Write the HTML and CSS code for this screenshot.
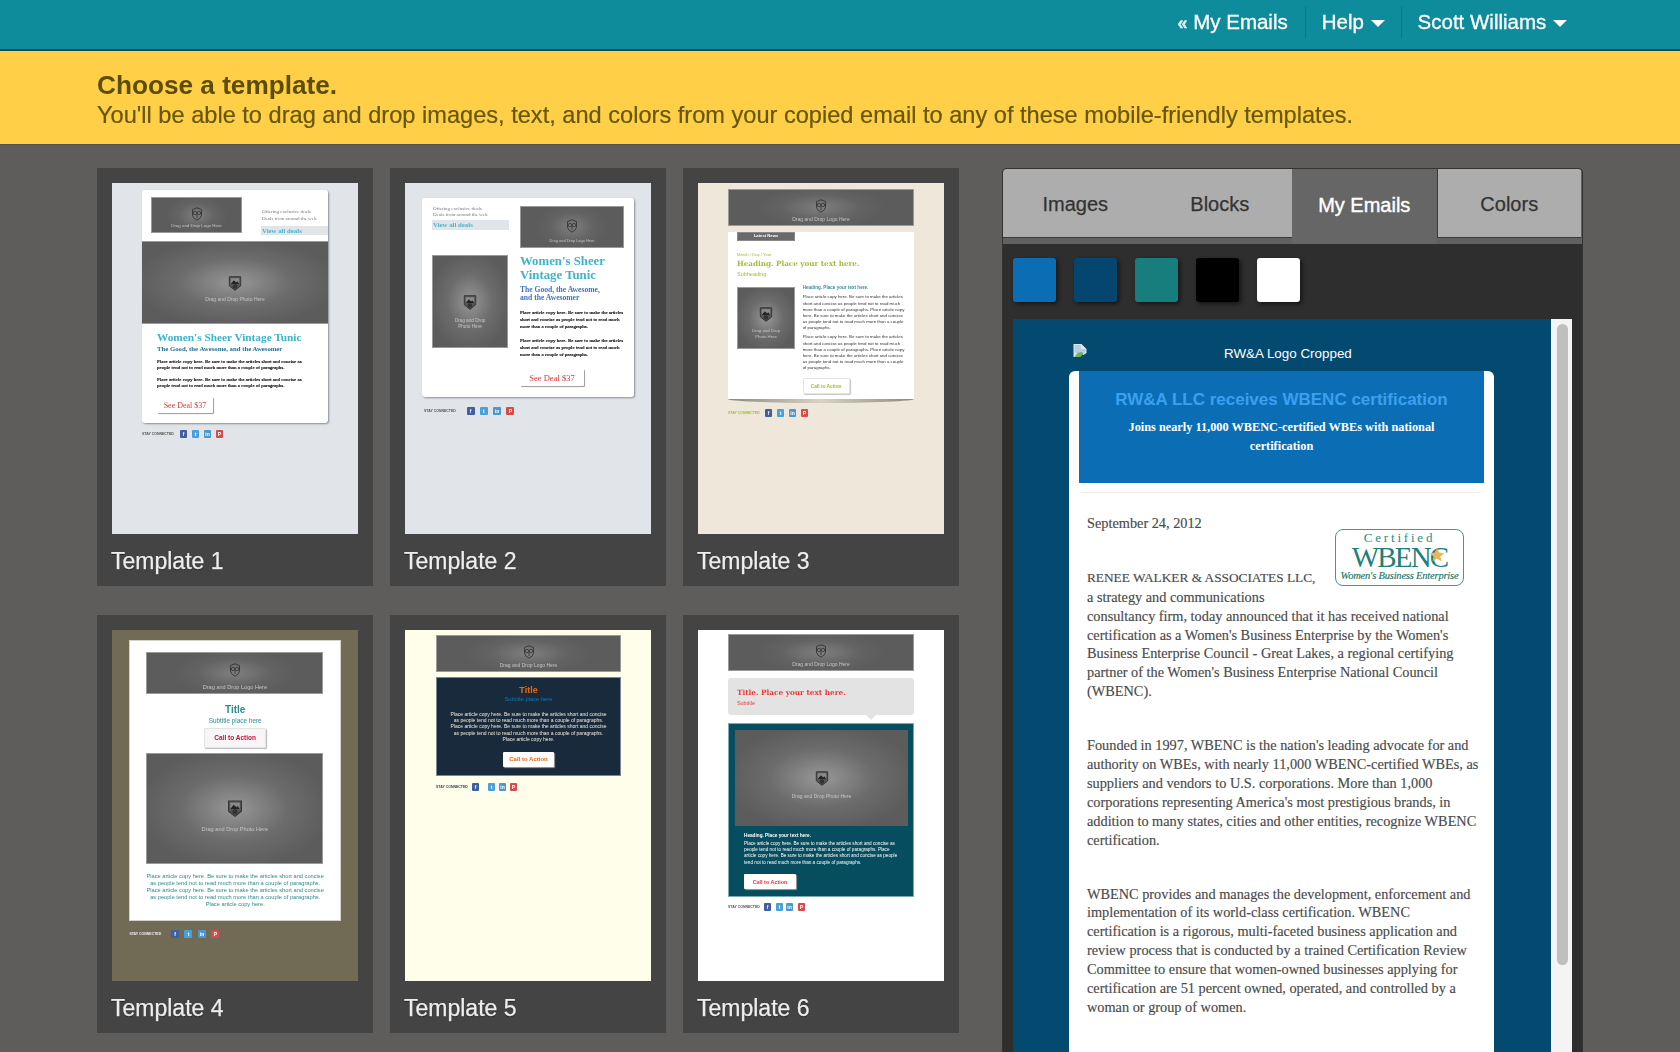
FILE: index.html
```html
<!DOCTYPE html>
<html lang="en">
<head>
<meta charset="utf-8">
<title>Choose a template</title>
<link rel="stylesheet" href="styles.css">
</head>
<body>
<svg class="defs" aria-hidden="true">
  <symbol id="i-logo" viewBox="0 0 12 14">
    <path d="M1.5 2.5 6 .8l4.500 1.700v5.500Q10.500 11 6 13.200 1.500 11 1.500 8z" fill="none" stroke="#333" stroke-width=".9"/>
    <circle cx="4" cy="6" r="1.700" fill="none" stroke="#333" stroke-width=".8"/>
    <circle cx="8" cy="6" r="1.700" fill="none" stroke="#333" stroke-width=".8"/>
    <path d="M6 7v4" stroke="#333" stroke-width=".8"/>
  </symbol>
  <symbol id="i-photo" viewBox="0 0 12 14">
    <path d="M1 1.500h10v8L6 13.500 1 9.500z" fill="#555" stroke="#333" stroke-width=".8"/>
    <rect x="2.300" y="2.800" width="7.400" height="5" fill="#8a8a8a"/>
    <path d="M2.300 7.800 5 4.500l2 2 1-1 1.700 2.300z" fill="#222"/>
    <circle cx="6" cy="10" r="2" fill="#333"/>
  </symbol>
</svg>
<div class="page">
  <header class="topbar">
    <a class="nav-item nav-back"><span class="nav-quote">«</span> My Emails</a>
    <a class="nav-item">Help <i class="caret"></i></a>
    <a class="nav-item">Scott Williams <i class="caret"></i></a>
  </header>
  <section class="banner">
    <h1>Choose a template.</h1>
    <p>You'll be able to drag and drop images, text, and colors from your copied email to any of these mobile-friendly templates.</p>
  </section>
  <main class="main">
    <div class="grid">

      <article class="card">
        <div class="thumb thumb-1">
          <div class="t1-card">
            <div class="t1-head">
              <div class="ph t1-logo"><svg class="ph-icon"><use href="#i-logo"/></svg><span>Drag and Drop Logo Here</span></div>
              <div class="t1-offer">
                <p class="offer-text">Offering exclusive deals<br>Deals from around the web</p>
                <p class="offer-link">View all deals</p>
              </div>
            </div>
            <div class="ph ph-photo t1-hero"><svg class="ph-icon"><use href="#i-photo"/></svg><span>Drag and Drop Photo Here</span></div>
            <div class="t1-body">
              <h3 class="t1-title">Women's Sheer Vintage Tunic</h3>
              <h4 class="t1-sub">The Good, the Awesome, and the Awesomer</h4>
              <p class="t1-para">Place article copy here. Be sure to make the articles short and concise as people tend not to read much more than a couple of paragraphs.</p>
              <p class="t1-para t1-para-2">Place article copy here. Be sure to make the articles short and concise as people tend not to read much more than a couple of paragraphs.</p>
              <span class="t-btn t1-btn">See Deal $37</span>
            </div>
          </div>
          <div class="social social-1"><span class="soc-label">STAY CONNECTED</span><i class="soc fb">f</i><i class="soc tw">t</i><i class="soc li">in</i><i class="soc pi">P</i></div>
        </div>
        <h2 class="card-label">Template 1</h2>
      </article>

      <article class="card">
        <div class="thumb thumb-2">
          <div class="t2-card">
            <div class="t2-left">
              <p class="offer-text">Offering exclusive deals<br>Deals from around the web</p>
              <p class="offer-link t2-link">View all deals</p>
              <div class="ph ph-photo t2-photo"><svg class="ph-icon"><use href="#i-photo"/></svg><span>Drag and Drop<br>Photo Here</span></div>
            </div>
            <div class="t2-right">
              <div class="ph t2-logo"><svg class="ph-icon"><use href="#i-logo"/></svg><span>Drag and Drop Logo Here</span></div>
              <h3 class="t2-title">Women's Sheer<br>Vintage Tunic</h3>
              <h4 class="t2-sub">The Good, the Awesome,<br>and the Awesomer</h4>
              <p class="t2-para">Place article copy here. Be sure to make the articles short and concise as people tend not to read much more than a couple of paragraphs.</p>
              <p class="t2-para t2-para-2">Place article copy here. Be sure to make the articles short and concise as people tend not to read much more than a couple of paragraphs.</p>
              <span class="t-btn t2-btn">See Deal $37</span>
            </div>
          </div>
          <div class="social social-2"><span class="soc-label">STAY CONNECTED</span><i class="soc fb">f</i><i class="soc tw">t</i><i class="soc li">in</i><i class="soc pi">P</i></div>
        </div>
        <h2 class="card-label">Template 2</h2>
      </article>

      <article class="card">
        <div class="thumb thumb-3">
          <div class="ph t3-logo"><svg class="ph-icon"><use href="#i-logo"/></svg><span>Drag and Drop Logo Here</span></div>
          <div class="t3-sheet">
            <span class="t3-tab">Latest News</span>
            <p class="t3-date">Month / Day / Year</p>
            <h3 class="t3-title">Heading. Place your text here.</h3>
            <p class="t3-sub">Subheading</p>
            <div class="t3-row">
              <div class="ph ph-photo t3-photo"><svg class="ph-icon"><use href="#i-photo"/></svg><span>Drag and Drop<br>Photo Here</span></div>
              <div class="t3-col">
                <h4 class="t3-head">Heading. Place your text here.</h4>
                <p class="t3-para">Place article copy here. Be sure to make the articles short and concise as people tend not to read much more than a couple of paragraphs. Place article copy here. Be sure to make the articles short and concise as people tend not to read much more than a couple of paragraphs.</p>
                <p class="t3-para t3-para-2">Place article copy here. Be sure to make the articles short and concise as people tend not to read much more than a couple of paragraphs. Place article copy here. Be sure to make the articles short and concise as people tend not to read much more than a couple of paragraphs.</p>
                <span class="t-btn t3-btn">Call to Action</span>
              </div>
            </div>
          </div>
          <div class="t3-curve"></div>
          <div class="social social-3"><span class="soc-label">STAY CONNECTED</span><i class="soc fb">f</i><i class="soc tw">t</i><i class="soc li">in</i><i class="soc pi">P</i></div>
        </div>
        <h2 class="card-label">Template 3</h2>
      </article>

      <article class="card">
        <div class="thumb thumb-4">
          <div class="t4-sheet">
            <div class="ph t4-logo"><svg class="ph-icon"><use href="#i-logo"/></svg><span>Drag and Drop Logo Here</span></div>
            <h3 class="t4-title">Title</h3>
            <p class="t4-sub">Subtitle place here</p>
            <span class="t-btn t4-btn">Call to Action</span>
            <div class="ph ph-photo t4-photo"><svg class="ph-icon"><use href="#i-photo"/></svg><span>Drag and Drop Photo Here</span></div>
            <p class="t4-para">Place article copy here. Be sure to make the articles short and concise as people tend not to read much more than a couple of paragraphs. Place article copy here. Be sure to make the articles short and concise as people tend not to read much more than a couple of paragraphs. Place article copy here.</p>
          </div>
          <div class="social social-4"><span class="soc-label">STAY CONNECTED</span><i class="soc fb">f</i><i class="soc tw">t</i><i class="soc li">in</i><i class="soc pi">P</i></div>
        </div>
        <h2 class="card-label">Template 4</h2>
      </article>

      <article class="card">
        <div class="thumb thumb-5">
          <div class="ph t5-logo"><svg class="ph-icon"><use href="#i-logo"/></svg><span>Drag and Drop Logo Here</span></div>
          <div class="t5-box">
            <h3 class="t5-title">Title</h3>
            <p class="t5-sub">Subtitle place here</p>
            <p class="t5-para">Place article copy here. Be sure to make the articles short and concise as people tend not to read much more than a couple of paragraphs. Place article copy here. Be sure to make the articles short and concise as people tend not to read much more than a couple of paragraphs. Place article copy here.</p>
            <span class="t-btn t5-btn">Call to Action</span>
          </div>
          <div class="social social-5"><span class="soc-label">STAY CONNECTED</span><i class="soc fb">f</i><i class="soc tw">t</i><i class="soc li">in</i><i class="soc pi">P</i></div>
        </div>
        <h2 class="card-label">Template 5</h2>
      </article>

      <article class="card">
        <div class="thumb thumb-6">
          <div class="ph t6-logo"><svg class="ph-icon"><use href="#i-logo"/></svg><span>Drag and Drop Logo Here</span></div>
          <div class="t6-bubble">
            <h3 class="t6-title">Title. Place your text here.</h3>
            <p class="t6-sub">Subtitle</p>
          </div>
          <div class="t6-box">
            <div class="ph ph-photo t6-photo"><svg class="ph-icon"><use href="#i-photo"/></svg><span>Drag and Drop Photo Here</span></div>
            <h4 class="t6-head">Heading. Place your text here.</h4>
            <p class="t6-para">Place article copy here. Be sure to make the articles short and concise as people tend not to read much more than a couple of paragraphs. Place article copy here. Be sure to make the articles short and concise as people tend not to read much more than a couple of paragraphs.</p>
            <span class="t-btn t6-btn">Call to Action</span>
          </div>
          <div class="social social-6"><span class="soc-label">STAY CONNECTED</span><i class="soc fb">f</i><i class="soc tw">t</i><i class="soc li">in</i><i class="soc pi">P</i></div>
        </div>
        <h2 class="card-label">Template 6</h2>
      </article>

    </div>

    <aside class="panel">
      <nav class="tabs">
        <a class="tab">Images</a>
        <a class="tab">Blocks</a>
        <a class="tab tab-active">My Emails</a>
        <a class="tab tab-split">Colors</a>
      </nav>
      <div class="swatches">
        <i class="swatch sw-blue"></i>
        <i class="swatch sw-navy"></i>
        <i class="swatch sw-teal"></i>
        <i class="swatch sw-black"></i>
        <i class="swatch sw-white"></i>
      </div>
      <div class="viewer">
        <div class="email">
          <div class="email-logo">
            <svg class="broken" viewBox="0 0 13 14" aria-hidden="true">
              <path d="M0 0h8l5 5v4l-3 2-2-1-3 3H0z" fill="#dfe6ee"/>
              <path d="M1 1h6l1 4h4v3l-2 1.500-2-1-2 1-5-1z" fill="#b9cde2"/>
              <path d="M1 13l3-4 4-1 2 1.500-3 3.500z" fill="#6fb44e"/>
            </svg>
            <span>RW&amp;A Logo Cropped</span>
          </div>
          <div class="email-card">
            <div class="email-hero">
              <h2>RW&amp;A LLC receives WBENC certification</h2>
              <p>Joins nearly 11,000 WBENC-certified WBEs with national certification</p>
            </div>
            <hr class="email-rule">
            <div class="email-body">
              <p class="email-date">September 24, 2012</p>
              <div class="wbenc">
                <span class="wbenc-cert">Certified</span>
                <span class="wbenc-name">WBENC<svg class="wbenc-star" viewBox="0 0 10 10" aria-hidden="true"><path d="M5 0l1.500 3.300 3.500.4-2.600 2.300.8 3.500L5 7.700 1.800 9.500l.8-3.500L0 3.700l3.500-.4z" fill="#e8b65a"/></svg></span>
                <span class="wbenc-tag">Women's Business Enterprise</span>
              </div>
              <p><span class="email-caps">RENEE WALKER &amp; ASSOCIATES LLC,</span><br>a strategy and communications<br>consultancy firm, today announced that it has received national<br>certification as a Women's Business Enterprise by the Women's<br>Business Enterprise Council - Great Lakes, a regional certifying<br>partner of the Women's Business Enterprise National Council<br>(WBENC).</p>
              <p>Founded in 1997, WBENC is the nation's leading advocate for and<br>authority on WBEs, with nearly 11,000 WBENC-certified WBEs, as<br>suppliers and vendors to U.S. corporations. More than 1,000<br>corporations representing America's most prestigious brands, in<br>addition to many states, cities and other entities, recognize WBENC<br>certification.</p>
              <p>WBENC provides and manages the development, enforcement and<br>implementation of its world-class certification. WBENC<br>certification is a rigorous, multi-faceted business application and<br>review process that is conducted by a trained Certification Review<br>Committee to ensure that women-owned businesses applying for<br>certification are 51 percent owned, operated, and controlled by a<br>woman or group of women.</p>
            </div>
          </div>
        </div>
        <div class="scrollbar"><i class="scroll-thumb"></i></div>
      </div>
    </aside>
  </main>
</div>
</body>
</html>
```
FILE: styles.css
```css
* { box-sizing: border-box; }
html, body { margin: 0; height: 100%; overflow: hidden; }
body { background: #5e5d5b; font-family: "Liberation Sans", Arial, sans-serif; }
h1, h2, h3, h4, p { margin: 0; font-weight: normal; }
i { font-style: normal; }
.defs { position: absolute; width: 0; height: 0; }
.page { height: 1052px; display: flex; flex-direction: column; overflow: hidden; filter: blur(.35px); }

/* top bar */
.topbar { height: 51px; flex: none; display: flex; justify-content: flex-end; background: #0f8c9b; border-bottom: 2px solid #0e4a52; padding: 7px 97px 0 0; }
.nav-item { height: 31px; line-height: 30px; color: #fff; font-size: 20.500px; -webkit-text-stroke: .3px #fff; padding: 0 16px 0 16px; border-left: 1px solid #0b7582; white-space: nowrap; }
.nav-back { border-left: 0; padding-right: 17px; }
.nav-quote { font-size: 18px; color: #d8eef0; font-weight: bold; }
.caret { display: inline-block; width: 0; height: 0; border-left: 7px solid transparent; border-right: 7px solid transparent; border-top: 7px solid #fff; vertical-align: 2px; margin-left: 1px; }

/* banner */
.banner { height: 94px; flex: none; background: #ffcf47; border-bottom: 1px solid #55554f; padding: 20px 0 0 97px; color: #66570a; }
.banner h1 { font-size: 26.200px; line-height: 29px; font-weight: bold; color: #5d4d04; }
.banner p { font-size: 23.600px; line-height: 31px; -webkit-text-stroke: .2px #66570a; white-space: nowrap; }

/* layout */
.main { flex: 1; min-height: 0; display: flex; padding: 23px 0 0 97px; }
.grid { display: grid; grid-template-columns: repeat(3, 276px); grid-auto-rows: 418px; gap: 29px 17px; flex: none; }
.card { background: #444; padding: 15px 15px 0 15px; }
.thumb { width: 246px; height: 351px; overflow: hidden; filter: blur(.3px); }
.card-label { margin: 14px 0 0 -1px; font-size: 23px; line-height: 27px; color: #eee; -webkit-text-stroke: .25px #eee; text-shadow: 0 1px 1px #222; }
.thumb-1, .thumb-2 { background: #e1e4e8; }
.thumb-3 { background: #efe8da; }
.thumb-4 { background: #716a55; }
.thumb-5 { background: #fffeea; }
.thumb-6 { background: #fff; }

/* placeholders */
.ph { display: flex; flex-direction: column; align-items: center; justify-content: space-between; padding: 9px 0 3px; text-align: center; background: radial-gradient(ellipse 35% 60% at center, #7f7f7f 0, #636363 60%, #5c5c5c 100%); border: 1px solid #9a9a9a; color: #c4c4c4; font-size: 5px; line-height: 6px; flex: none; }
.ph-icon { width: 12px; height: 14px; flex: none; }
.ph-photo { justify-content: center; gap: 5px; padding: 11px 0 0; background: radial-gradient(ellipse 55% 55% at center, #979797 0, #6c6c6c 55%, #5c5c5c 100%); }
.ph-photo .ph-icon { width: 14px; height: 16px; }

/* shared thumbnail pieces */
.t-btn { display: flex; align-items: center; justify-content: center; background: #fff; box-shadow: 1px 1px 1px #9a9a9a; border-radius: 1px; }
.social { display: flex; align-items: center; height: 8px; }
.soc-label { font-size: 3.500px; color: #555; font-weight: bold; white-space: nowrap; }
.soc { width: 7px; height: 8px; display: flex; align-items: center; justify-content: center; color: #fff; font-size: 5px; font-weight: bold; flex: none; border-radius: 1px; }
.fb { background: #3f5fa3; }
.tw { background: #48a0dc; }
.li { background: #4d97d0; }
.pi { background: #d44c4c; }
.offer-text { font-family: "Liberation Serif", serif; font-size: 5px; line-height: 6.500px; color: #777; padding-left: 1px; white-space: nowrap; }
.offer-link { font-family: "Liberation Serif", serif; font-size: 6.800px; font-weight: bold; line-height: 9px; color: #4ab7cc; background: #e1e4e8; padding-left: 1px; margin-top: 4px; }

/* template 1 */
.t1-card { width: 186px; height: 233px; margin: 7px 0 0 30px; background: #fff; border-radius: 3px; box-shadow: 1px 1px 2px #858e9e; overflow: hidden; }
.t1-head { display: flex; height: 51px; padding: 7px 0 0 9px; }
.t1-logo { width: 91px; height: 36px; font-size: 4.400px; }
.t1-offer { margin-left: 19px; padding-top: 12px; flex: 1; }
.t1-hero { width: 186px; height: 83px; border-width: 1px 0; font-size: 5px; }
.t1-body { padding-left: 15px; }
.t1-title { font-family: "Liberation Serif", serif; font-size: 11.300px; line-height: 12px; font-weight: bold; color: #3eb3c9; margin-top: 6.700px; white-space: nowrap; }
.t1-sub { font-family: "Liberation Serif", serif; font-size: 6.750px; line-height: 8px; font-weight: bold; color: #1f6f8c; margin-top: 2px; white-space: nowrap; }
.t1-para { font-family: "Liberation Serif", serif; font-size: 5px; line-height: 6px; color: #000; -webkit-text-stroke: .15px #000; width: 158px; margin-top: 6.500px; }
.t1-para-2 { margin-top: 6px; }
.t1-btn { width: 56px; height: 16px; margin-top: 8px; color: #d63c3c; font: 8px "Liberation Serif", serif; }
.social-1 { margin: 7px 0 0 30px; gap: 5px; }
.social-1 .soc-label { width: 33px; }

/* template 2 */
.t2-card { display: flex; width: 212px; height: 199.500px; margin: 14.500px 0 0 17px; background: #fff; border-radius: 3px; box-shadow: 1px 1px 2px #858e9e; }
.t2-left { width: 77px; margin-left: 10px; padding-top: 8px; }
.t2-link { margin-top: 1px; height: 10px; }
.t2-photo { width: 76px; height: 93.400px; margin-top: 25.600px; font-size: 4.700px; gap: 8px; padding-top: 20px; }
.t2-right { width: 104px; margin-left: 11px; padding-top: 8.500px; }
.t2-logo { width: 104px; height: 42px; font-size: 3.900px; padding-top: 12px; }
.t2-title { font-family: "Liberation Serif", serif; font-size: 12.800px; line-height: 14.500px; font-weight: bold; color: #3eb3c9; margin-top: 5.750px; white-space: nowrap; }
.t2-sub { font-family: "Liberation Serif", serif; font-size: 7.600px; line-height: 8px; font-weight: bold; color: #3f72ba; margin-top: 3px; white-space: nowrap; }
.t2-para { font-family: "Liberation Serif", serif; font-size: 5px; line-height: 7px; color: #000; -webkit-text-stroke: .15px #000; margin-top: 7.500px; }
.t2-para-2 { margin-top: 7px; }
.t2-btn { width: 64px; height: 17.500px; margin-top: 10.500px; color: #d63c3c; font: 8.500px "Liberation Serif", serif; }
.social-2 { margin: 9.600px 0 0 19px; }
.social-2 .soc-label { width: 42.500px; }
.social-2 .soc { width: 8px; margin-right: 5.300px; }

/* template 3 */
.t3-logo { width: 186px; height: 37px; margin: 6px 0 0 30px; }
.t3-sheet { width: 186px; height: 167px; margin: 6px 0 0 30px; background: #fff; padding-left: 9px; }
.t3-tab { display: block; width: 58px; height: 8.700px; background: #6a6a6a; border: 1px solid #8a8a8a; color: #fff; font-size: 4.200px; line-height: 6.700px; font-weight: bold; text-align: center; }
.t3-date { font-size: 4.200px; line-height: 5px; color: #a9b83e; margin-top: 11.500px; }
.t3-title { font-family: "DejaVu Serif", serif; font-size: 7.200px; line-height: 10px; font-weight: bold; color: #a9b83e; margin-top: 1.800px; white-space: nowrap; }
.t3-sub { font-size: 5.500px; line-height: 6px; color: #a9b83e; margin-top: 2px; }
.t3-row { display: flex; gap: 7.700px; margin-top: 8.500px; }
.t3-photo { width: 58px; height: 62.300px; margin-top: 1.200px; font-size: 4.300px; gap: 6.500px; padding-top: 10px; }
.t3-col { width: 103px; }
.t3-head { font-size: 4.600px; line-height: 5px; font-weight: bold; color: #3c8f94; white-space: nowrap; }
.t3-para { font-size: 4.350px; line-height: 6.200px; color: #333; margin-top: 3.900px; }
.t3-para-2 { margin-top: 2.800px; }
.t3-btn { width: 47px; height: 16px; margin-top: 6.400px; color: #a9b83e; font-size: 4.800px; font-weight: bold; border: 1px solid #e4e4e4; box-shadow: 1px 1px 1px #c8c8c8; }
.t3-curve { width: 186px; height: 4px; margin-left: 30px; background: linear-gradient(90deg, #8d887b, #d9d3c6 50%, #8d887b); border-radius: 0 0 50% 50% / 0 0 100% 100%; }
.social-3 { margin: 6px 0 0 30px; gap: 5px; }
.social-3 .soc-label { width: 32px; color: #a9b83e; }

/* template 4 */
.t4-sheet { width: 211.600px; height: 280.700px; margin: 10px 0 0 17.400px; background: #fff; border: 1px solid #d4d2cb; padding-top: 11px; text-align: center; }
.t4-logo { width: 177px; height: 41.700px; margin-left: 16px; font-size: 5.600px; padding-top: 10px; }
.t4-title { font-size: 10px; line-height: 10px; font-weight: bold; color: #2f8a8c; margin-top: 11.300px; }
.t4-sub { font-size: 6.400px; line-height: 7px; color: #2f8a8c; margin-top: 2px; }
.t4-btn { width: 62px; height: 20.300px; margin: 3.700px auto 0; color: #c0123c; font-size: 6.500px; font-weight: bold; background: #f7f5f5; border: 1px solid #e4e4e4; box-shadow: 1px 1px 1px #bbb; }
.t4-photo { width: 177px; height: 111px; margin: 5px 0 0 16px; font-size: 5.600px; gap: 9px; padding-top: 15px; }
.t4-photo .ph-icon { width: 16px; height: 18px; }
.t4-para { font-size: 5.700px; line-height: 7px; color: #2f8a8c; margin: 9.500px 16px 0; }
.social-4 { margin: 9.300px 0 0 17.400px; }
.social-4 .soc-label { width: 41.600px; color: #eee; }
.social-4 .soc { width: 8px; margin-right: 5.500px; }

/* template 5 */
.t5-logo { width: 185px; height: 37px; margin: 5px 0 0 31px; }
.t5-box { width: 185px; height: 99px; margin: 5px 0 0 31px; background: #192a3c; border: 1px solid #7c8794; padding-top: 7.500px; text-align: center; }
.t5-title { font-size: 9px; line-height: 9px; font-weight: bold; color: #e9690f; }
.t5-sub { font-size: 5.800px; line-height: 6px; color: #0b7bb8; margin-top: 1.500px; }
.t5-para { font-size: 5px; line-height: 6.300px; color: #f1ead8; margin: 8.800px 13px 0; }
.t5-btn { width: 51.500px; height: 15.300px; margin: 9.400px auto 0; color: #e9690f; font-size: 6px; font-weight: bold; }
.social-5 { margin: 6.500px 0 0 31px; }
.social-5 .soc-label { width: 36px; color: #2b4560; }
.social-5 .soc:nth-child(2) { margin-right: 9px; }
.social-5 .soc:nth-child(3), .social-5 .soc:nth-child(4) { margin-right: 4px; }

/* template 6 */
.t6-logo { width: 186px; height: 37px; margin: 4px 0 0 30px; }
.t6-bubble { position: relative; width: 186px; height: 37px; margin: 7px 0 0 30px; padding: 10px 0 0 9px; background: #e3e3e3; border-radius: 3px; }
.t6-bubble::after { content: ""; position: absolute; right: 38px; bottom: -5px; border-left: 5px solid transparent; border-right: 5px solid transparent; border-top: 5px solid #e3e3e3; }
.t6-title { font-family: "DejaVu Serif", serif; font-size: 7.300px; line-height: 9px; font-weight: bold; color: #ef3a3a; white-space: nowrap; }
.t6-sub { font-size: 5.400px; line-height: 5px; color: #ef3a3a; margin-top: 3.500px; }
.t6-box { width: 186px; height: 174px; margin: 8px 0 0 30px; background: #064d5f; border: 1px solid #7fa9b3; padding: 6px 6px 0; }
.t6-photo { width: 173px; height: 96px; border: 0; gap: 7px; padding-top: 13px; }
.t6-head { font-size: 4.700px; line-height: 5px; font-weight: bold; color: #fff; margin: 6.500px 0 0 9px; }
.t6-para { font-size: 4.650px; line-height: 6.300px; color: #fff; margin: 3.400px 0 0 9px; width: 156px; }
.t6-btn { width: 52px; height: 15px; margin: 8px 0 0 9px; color: #ef3a3a; font-size: 5.400px; font-weight: bold; }
.social-6 { margin: 5.500px 0 0 30px; }
.social-6 .soc-label { width: 36px; }
.social-6 .soc { margin-right: 5px; }
.social-6 .soc:nth-child(3) { margin-right: 3px; }

/* right panel */
.panel { width: 581px; margin-left: 43px; flex: none; display: flex; flex-direction: column; background: #2e2e2e; border: 1px solid #333; border-bottom: 0; border-radius: 5px 5px 0 0; overflow: hidden; }
.tabs { display: flex; height: 75px; flex: none; padding-bottom: 6px; background: #616161; }
.tab { width: 144.500px; display: flex; align-items: center; justify-content: center; padding-top: 3px; background: #adadad; border-bottom: 1px solid #3a3a3a; color: #333; font-size: 20px; -webkit-text-stroke: .25px #333; }
.tab-active { background: #666; border-bottom: 0; margin-bottom: -6px; padding-bottom: 6px; color: #fff; -webkit-text-stroke: .4px #fff; }
.tab-split { border-left: 1px solid #3a3a3a; }
.swatches { height: 75px; flex: none; display: flex; gap: 18px; padding: 14px 0 0 10px; }
.swatch { width: 43px; height: 44px; border-radius: 3px; box-shadow: 2px 2px 4px rgba(0,0,0,.55); }
.sw-blue { background: #0b6eb5; }
.sw-navy { background: #04466f; }
.sw-teal { background: #177d7d; }
.sw-black { background: #000; }
.sw-white { background: #fff; }

.viewer { flex: 1; min-height: 0; display: flex; margin: 0 10px 0 10px; overflow: hidden; }
.email { width: 538px; background: #04496f; flex: none; padding-left: 56px; }
.email-logo { height: 52px; display: flex; align-items: flex-start; padding: 25px 0 0 4px; color: #fff; font-size: 13.400px; line-height: 20px; }
.broken { width: 14px; height: 14px; }
.email-logo span { margin-left: 137px; }
.email-card { width: 425px; background: #fff; border-radius: 6px 6px 0 0; padding-bottom: 40px; }
.email-hero { margin: 0 10px; height: 112px; background: #0b6eb5; padding: 16px 14px 0; text-align: center; }
.email-hero h2 { font-size: 17px; line-height: 25px; font-weight: bold; color: #3ba0f0; white-space: nowrap; }
.email-hero p { font-family: "Liberation Serif", serif; font-size: 12.300px; line-height: 19px; font-weight: bold; color: #fff; margin-top: 5.500px; padding: 0 15px; }
.email-rule { border: 0; height: 1px; background: #eee; margin: 9px 13px 0; }
.email-body { padding: 21px 0 0 18px; font-family: "Liberation Serif", serif; font-size: 14.300px; line-height: 18.930px; color: #4a4a4a; -webkit-text-stroke: .15px #4a4a4a; white-space: nowrap; }
.email-body p { margin-bottom: 34.800px; }
.email-caps { font-size: 13.300px; }
.email-date { float: left; width: 200px; }
.wbenc { float: right; width: 129px; height: 57px; margin: 15px 30px 0 0; border: 1.500px solid #3d9a93; border-radius: 8px; color: #2a8d86; text-align: center; display: flex; flex-direction: column; align-items: center; font-family: "Liberation Serif", serif; overflow: hidden; -webkit-text-stroke: 0; padding-top: 1px; }
.wbenc-cert { font-size: 13px; line-height: 13px; letter-spacing: 2.800px; }
.wbenc-name { position: relative; font-size: 29px; line-height: 26px; letter-spacing: -1.800px; color: #1f8078; }
.wbenc-star { position: absolute; right: 3px; top: 4px; width: 14px; height: 14px; }
.wbenc-tag { font-size: 10.500px; line-height: 12px; font-style: italic; letter-spacing: -.2px; color: #1f7468; -webkit-text-stroke: .15px #1f7468; }
.email-body > p:nth-of-type(2) { clear: left; }
.scrollbar { width: 22px; flex: none; background: #f4f4f4; padding: 5px 5px 0 6px; }
.scroll-thumb { display: block; width: 11px; height: 641px; background: #bfbfbf; border-radius: 6px; }
```
